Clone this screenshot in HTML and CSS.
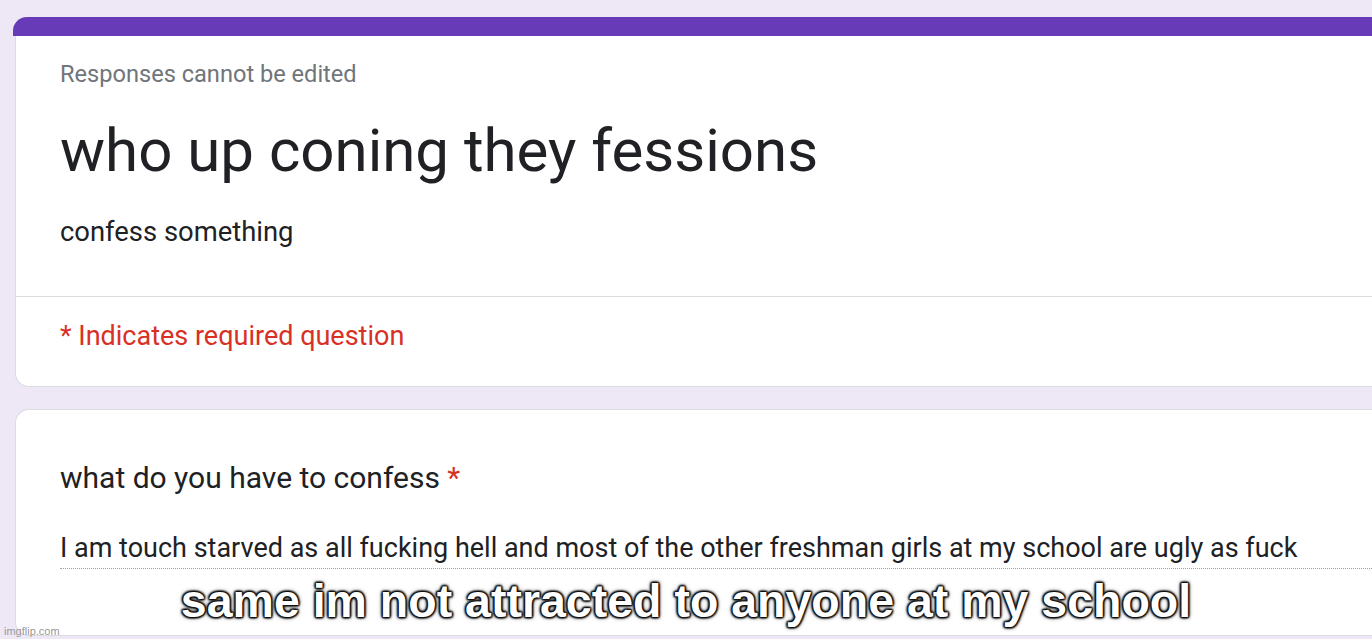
FILE: index.html
```html
<!DOCTYPE html>
<html>
<head>
<meta charset="utf-8">
<link rel="stylesheet" href="styles.css">
</head>
<body>
<div class="page">
  <div class="card head-card">
    <div class="band"></div>
    <div class="card-body">
      <div class="header">
        <div class="note">Responses cannot be edited</div>
        <div class="title">who up coning they fessions</div>
        <div class="desc">confess something</div>
      </div>
      <div class="required">* Indicates required question</div>
    </div>
  </div>
  <div class="card q-card">
    <div class="question">what do you have to confess <span class="star">*</span></div>
    <div class="answer">I am touch starved as all fucking hell and most of the other freshman girls at my school are ugly as fuck</div>
  </div>
  <div class="caption">same im not attracted to anyone at my school</div>
  <div class="watermark">imgflip.com</div>
</div>
</body>
</html>
```
FILE: styles.css
```css
html, body {
  margin: 0;
  padding: 0;
  background: #ede7f6;
  overflow: hidden;
}
.page {
  position: relative;
  width: 1372px;
  height: 639px;
  overflow: hidden;
  padding: 17px 0 0 13px;
  box-sizing: border-box;
  font-family: Roboto, "Liberation Sans", sans-serif;
}
.head-card {
  width: 1420px;
}
.band {
  height: 19px;
  background: #673ab7;
  border-radius: 14px 14px 0 0;
}
.card-body {
  margin-left: 2px;
  background: #fff;
  border: 1px solid #dadce0;
  border-top: none;
  border-radius: 0 0 0 14px;
}
.header {
  padding: 24px 0 48px 44px;
  border-bottom: 1px solid #dadce0;
}
.note {
  font-size: 23.6px;
  line-height: 28px;
  color: #70757a;
}
.title {
  font-size: 60px;
  line-height: 70px;
  color: #202124;
  margin-top: 28px;
}
.desc {
  font-size: 27.4px;
  line-height: 32px;
  color: #202124;
  margin-top: 30px;
}
.required {
  padding: 23px 0 34px 44px;
  font-size: 27px;
  line-height: 32px;
  color: #d93025;
}
.q-card {
  margin: 22px 0 0 2px;
  width: 1418px;
  height: 227px;
  background: #fff;
  border: 1px solid #dadce0;
  border-right: none;
  border-radius: 14px 0 0 14px;
  box-sizing: border-box;
  padding: 50px 0 0 44px;
}
.question {
  font-size: 30px;
  line-height: 36px;
  color: #202124;
}
.star {
  color: #d93025;
}
.answer {
  margin-top: 36px;
  width: 1400px;
  font-size: 27px;
  line-height: 32px;
  color: #202124;
  padding-bottom: 4px;
  border-bottom: 1px dotted #9aa0a6;
  white-space: nowrap;
}
.caption {
  position: absolute;
  left: 0;
  right: 0;
  top: 574px;
  text-align: center;
  font-family: "Liberation Sans", Arial, sans-serif;
  font-weight: bold;
  font-size: 46.5px;
  line-height: 54px;
  color: #fff;
  text-shadow: 0 0 2px #000, 0 0 2px #000, 0 0 3px #222, 0 0 5px #333, 1px 1px 2px #000, -1px -1px 2px #000, 1px -1px 2px #000, -1px 1px 2px #000;
}
.watermark {
  position: absolute;
  left: 4px;
  bottom: 2px;
  font-family: "Liberation Sans", Arial, sans-serif;
  font-size: 11px;
  color: #999;
}
```
